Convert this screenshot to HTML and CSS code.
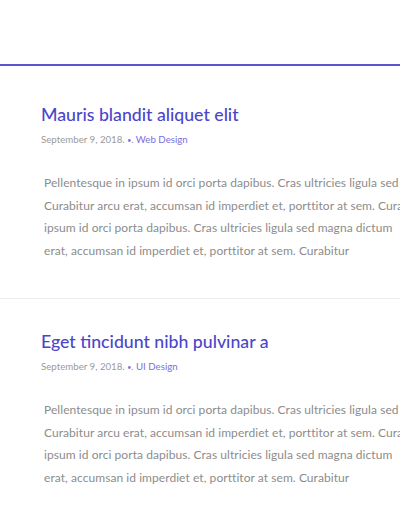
FILE: index.html
```html
<!DOCTYPE html>
<html lang="en">
<head>
<meta charset="utf-8">
<link rel="stylesheet" href="styles.css">
</head>
<body>
<div class="page">
  <header class="topbar"></header>
  <main class="posts">
    <article class="post post-first">
      <h2 class="post-title">Mauris blandit aliquet elit</h2>
      <div class="post-meta">September 9, 2018. <span class="dot">•</span>. <a class="cat" href="#">Web Design</a></div>
      <p class="post-text">Pellentesque in ipsum id orci porta dapibus. Cras ultricies ligula sed<br>Curabitur arcu erat, accumsan id imperdiet et, porttitor at sem. Curabitur<br>ipsum id orci porta dapibus. Cras ultricies ligula sed magna dictum<br>erat, accumsan id imperdiet et, porttitor at sem. Curabitur</p>
    </article>
    <article class="post">
      <h2 class="post-title">Eget tincidunt nibh pulvinar a</h2>
      <div class="post-meta">September 9, 2018. <span class="dot">•</span>. <a class="cat" href="#">UI Design</a></div>
      <p class="post-text">Pellentesque in ipsum id orci porta dapibus. Cras ultricies ligula sed<br>Curabitur arcu erat, accumsan id imperdiet et, porttitor at sem. Curabitur<br>ipsum id orci porta dapibus. Cras ultricies ligula sed magna dictum<br>erat, accumsan id imperdiet et, porttitor at sem. Curabitur</p>
    </article>
  </main>
</div>
</body>
</html>
```

FILE: styles.css
```css
* { box-sizing: border-box; }
html, body { margin: 0; padding: 0; background: #fff; }
body { font-family: "Lato", "Open Sans", sans-serif; }
.page { width: 400px; height: 516px; overflow: hidden; }
.topbar { height: 66px; border-bottom: 2px solid #5b55cc; }
.posts { display: flex; flex-direction: column; }
.post { padding: 32px 0 0 41px; border-bottom: 1px solid #ececec; height: 233px; }
.post-first { padding-top: 38px; }
.post-title { margin: 0; font-size: 17.7px; font-weight: 500; color: #4b46c9; line-height: 22px; white-space: nowrap; }
.post-meta { margin-top: 6px; font-size: 9.7px; line-height: 14px; color: #9a9a9a; white-space: nowrap; }
.dot { color: #7b6fe0; font-size: 7px; }
.cat { color: #7b6fe0; text-decoration: none; }
.post-text { margin: 25px 0 0 3px; font-size: 12px; letter-spacing: 0.06px; line-height: 22.7px; color: #8c8c8c; white-space: nowrap; }
```
